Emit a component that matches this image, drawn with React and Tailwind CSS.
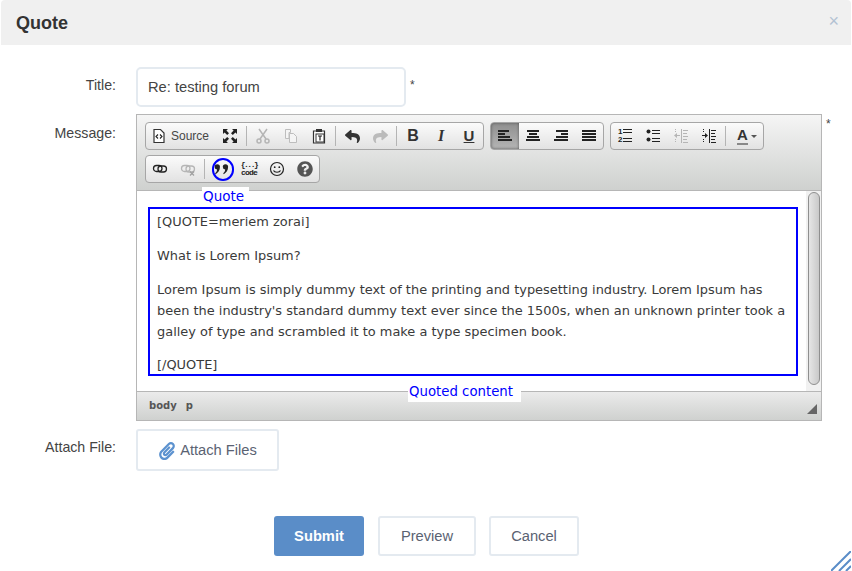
import React from "react";
import { FaPaperclip, FaReply, FaShare, FaQuestionCircle } from "react-icons/fa";

const Bars = ({ rows, color = "#222" }) => (
  <svg width="16" height="16" viewBox="0 0 16 16">
    {rows.map((r, i) => <rect key={i} x={r[0]} y={r[1]} width={r[2]} height={r[3] || 2} fill={color} />)}
  </svg>
);

const Btn = ({ children, active, w = "w-[28px]" }) => (
  <div className={"h-[26px] flex items-center justify-center " + w + (active ? " bg-gradient-to-b from-[#8f8f8f] to-[#b5b5b5] shadow-[inset_0_0_3px_#555] rounded-l-[3px]" : "")}>{children}</div>
);

const Sep = () => <div className="w-[5px] flex justify-center"><div className="w-px h-[20px] mt-[3px] bg-[#b4b4b4]" /></div>;

const Group = ({ children, className = "" }) => (
  <div className={"h-[28px] flex border border-[#a6a6a6] rounded-[4px] bg-gradient-to-b from-[#fbfbfb] to-[#e2e2e2] " + className}>{children}</div>
);

function SourceIcon() {
  return (
    <svg width="16" height="16" viewBox="0 0 16 16">
      <path d="M3 1.500h6.500l3.500 3.500v9.500H3z" fill="#fff" stroke="#333" strokeWidth="1.200" />
      <path d="M7 6.500 5 8.500l2 2M9 6.500l2 2-2 2" fill="none" stroke="#222" strokeWidth="1.100" />
    </svg>
  );
}
function MaxIcon() {
  return (
    <svg width="16" height="16" viewBox="0 0 16 16" fill="#222">
      <path d="M1 1h5L4.400 2.600 7 5.200 5.200 7 2.600 4.400 1 6zM15 1v5l-1.600-1.600L10.800 7 9 5.200l2.600-2.600L10 1zM1 15v-5l1.600 1.600L5.200 9 7 10.800l-2.600 2.600L6 15zM15 15h-5l1.600-1.600L9 10.800 10.800 9l2.600 2.600L15 10z" />
    </svg>
  );
}
function CutIcon() {
  return (
    <svg width="16" height="16" viewBox="0 0 16 16" fill="none" stroke="#b5b5b5" strokeWidth="1.500">
      <path d="M4 1l7 10M12 1 5 11" />
      <circle cx="4" cy="13" r="2" />
      <circle cx="12" cy="13" r="2" />
    </svg>
  );
}
function CopyIcon() {
  return (
    <svg width="16" height="16" viewBox="0 0 16 16" fill="#f4f4f4" stroke="#bdbdbd">
      <path d="M2.500 1.500h5v3h-1.500v6h-3.500z" />
      <path d="M6.500 5.500h4l3 3v6h-7z" />
    </svg>
  );
}
function PasteIcon() {
  return (
    <svg width="16" height="16" viewBox="0 0 16 16">
      <path d="M2.500 3h11v12h-11z" fill="#fff" stroke="#333" strokeWidth="1.200" />
      <rect x="5" y="1" width="6" height="3" fill="#333" />
      <rect x="5" y="6" width="8" height="8" fill="#fff" stroke="#333" />
      <path d="M7 8h4M9 8v4.500" stroke="#222" strokeWidth="1.200" />
    </svg>
  );
}
function LinkIcon({ off }) {
  const c = off ? "#b5b5b5" : "#222";
  return (
    <svg width="16" height="16" viewBox="0 0 16 16" fill="none" stroke={c} strokeWidth="1.300">
      <rect x="1.500" y="4.500" width="8.500" height="6" rx="3" />
      <rect x="6" y="5" width="8.500" height="6" rx="3" />
      {off && <path d="M10 10.500l4 4M14 10.500l-4 4" stroke="#a0a0a0" />}
    </svg>
  );
}
function QuoteIcon() {
  return (
    <svg width="17" height="12" viewBox="0 0 18 14" fill="#222">
      <path d="M1 4.500a3.100 3.100 0 1 1 6.200 0c0 4-2 7-5 8.500l-.7-1c1.400-1 2.200-2.200 2.300-4.300A3.100 3.100 0 0 1 1 4.500z" />
      <path d="M10.500 4.500a3.100 3.100 0 1 1 6.200 0c0 4-2 7-5 8.500l-.7-1c1.400-1 2.200-2.200 2.300-4.300a3.100 3.100 0 0 1-2.800-3.200z" />
    </svg>
  );
}
function SmileIcon() {
  return (
    <svg width="16" height="16" viewBox="0 0 16 16" fill="none" stroke="#222" strokeWidth="1.200">
      <circle cx="8" cy="8" r="6.500" />
      <circle cx="5.700" cy="6.200" r="0.900" fill="#222" stroke="none" />
      <circle cx="10.300" cy="6.200" r="0.900" fill="#222" stroke="none" />
      <path d="M4.500 9.500c1 2.300 6 2.300 7 0" />
    </svg>
  );
}
function OlIcon() {
  return (
    <div className="relative w-[16px] h-[16px] font-['Liberation_Sans',sans-serif] text-[8px] font-bold leading-[8px] text-[#222]">
      <span className="absolute left-[1px] top-0">1</span>
      <span className="absolute left-[1px] top-[8px]">2</span>
      <div className="absolute left-[6px] top-[1px] w-[9px] h-[1px] bg-[#222]" />
      <div className="absolute left-[6px] top-[4px] w-[9px] h-[1px] bg-[#222]" />
      <div className="absolute left-[6px] top-[10px] w-[9px] h-[1px] bg-[#222]" />
      <div className="absolute left-[6px] top-[13px] w-[9px] h-[1px] bg-[#222]" />
    </div>
  );
}
function UlIcon() {
  return (
    <svg width="16" height="16" viewBox="0 0 16 16" fill="#222">
      <circle cx="3.500" cy="3.500" r="2" />
      <circle cx="3.500" cy="11.500" r="2" />
      <path d="M7 2h8v1H7zM7 5h8v1H7zM7 10h8v1H7zM7 13h8v1H7z" />
    </svg>
  );
}
function IndentIcon({ off, flip }) {
  const c = off ? "#b5b5b5" : "#222";
  return (
    <svg width="16" height="16" viewBox="0 0 16 16" fill={c}>
      <path d="M8 1h1v14H8zM10 2h5v1h-5zM10 5h4v1h-4zM10 8h5v1h-5zM10 11h4v1h-4zM10 14h5v1h-5z" />
      <path d="M2 1h1v1H2zM2 3h1v1H2zM2 11h1v1H2zM2 13h1v1H2z" />
      {flip ? <path d="M1 7h3V5l3 2.500L4 10V8H1z" /> : <path d="M7 7H4V5L1 7.500 4 10V8h3z" />}
    </svg>
  );
}

const Label = ({ children, className = "" }) => (
  <div className={"w-[116px] text-right text-[14.2px] text-[#444] shrink-0 " + className}>{children}</div>
);

export default function App() {
  return (
    <div className="relative w-[852px] h-[571px] bg-white overflow-hidden font-['Liberation_Sans',Arial,sans-serif]">
      <div className="h-[45px] ml-px mr-px bg-[#f0f0f0] rounded-t-[4px] flex items-center justify-between pl-[15px] pr-[12px]">
        <h3 className="text-[18px] font-bold text-[#333] relative top-[1px]">Quote</h3>
        <span className="text-[18px] leading-none text-[#b3c2d3] relative top-[-2px]">×</span>
      </div>

      <div className="flex gap-[20px] mt-[22px]">
        <Label className="pt-[8px]">Title:</Label>
        <div className="w-[270px] h-[40px] border-2 border-[#e4eaf0] rounded-[5px] pl-[10px] flex items-center text-[14.7px] text-[#444]">Re: testing forum</div>
        <span className="text-[12px] text-[#444] -ml-[16px] pt-[9px]">*</span>
      </div>

      <div className="flex gap-[20px] mt-[7px]">
        <Label className="pt-[9px]">Message:</Label>
        <div className="relative w-[686px] h-[307px] border border-[#b6b6b6] flex flex-col">
          <div className="h-[76px] shrink-0 border-b border-[#b6b6b6] bg-gradient-to-b from-[#f5f5f5] to-[#cfd1cf] pt-[7px] pl-[8px] flex flex-col gap-[5px]">
            <div className="flex gap-[6px]">
              <Group>
                <div className="w-[70px] h-[26px] flex items-center pl-[5px] gap-[4px] text-[12px] text-[#474747]"><SourceIcon /><span>Source</span></div>
                <Btn><MaxIcon /></Btn>
                <Sep />
                <Btn><CutIcon /></Btn>
                <Btn><CopyIcon /></Btn>
                <Btn><PasteIcon /></Btn>
                <Sep />
                <Btn><FaReply size={15} color="#333" /></Btn>
                <Btn><FaShare size={15} color="#bbb" /></Btn>
                <Sep />
                <Btn><span className="text-[16px] font-bold text-[#333]">B</span></Btn>
                <Btn><span className="text-[16px] font-bold italic font-['Liberation_Serif',serif] text-[#333]">I</span></Btn>
                <Btn><span className="text-[15px] font-bold underline text-[#333]">U</span></Btn>
              </Group>
              <Group>
                <Btn active><Bars rows={[[1, 2, 11], [1, 5, 7], [1, 8, 12], [1, 11, 14]]} /></Btn>
                <Btn><Bars rows={[[2, 2, 12], [4, 5, 8], [2, 8, 12], [1, 11, 14]]} /></Btn>
                <Btn><Bars rows={[[3, 2, 12], [8, 5, 7], [3, 8, 12], [1, 11, 14]]} /></Btn>
                <Btn><Bars rows={[[1, 2, 14], [1, 5, 14], [1, 8, 14], [1, 11, 14]]} /></Btn>
              </Group>
              <Group>
                <Btn><OlIcon /></Btn>
                <Btn><UlIcon /></Btn>
                <Btn><IndentIcon off /></Btn>
                <Btn><IndentIcon flip /></Btn>
                <Sep />
                <div className="w-[35px] h-[26px] flex items-center pl-[9px] gap-[3px]">
                  <span className="text-[15px] font-bold leading-[14px] text-[#333] border-b-2 border-[#888] pb-[1px]">A</span>
                  <span className="w-0 h-0 border-x-[3px] border-x-transparent border-t-[3px] border-t-[#555]" />
                </div>
              </Group>
            </div>
            <Group className="w-[175px]">
              <Btn><LinkIcon /></Btn>
              <Btn><LinkIcon off /></Btn>
              <Sep />
              <Btn><QuoteIcon /></Btn>
              <Btn>
                <div className="font-['Liberation_Mono',monospace] font-bold text-[8px] text-[#222] text-center">
                  <div className="h-[8px] leading-[8px] tracking-[-1.5px]">{"{...}"}</div>
                  <div className="h-[8px] leading-[8px] tracking-[-0.8px]">code</div>
                </div>
              </Btn>
              <Btn><SmileIcon /></Btn>
              <Btn><FaQuestionCircle size={16} color="#555" /></Btn>
            </Group>
          </div>

          <div className="flex h-[200px] shrink-0 bg-white">
            <div className="flex-1 pt-[20px] pl-[20px] pr-[16px] text-[12.95px] leading-[21px] text-[#3a3a3a] font-['DejaVu_Sans',sans-serif]">
              <p>[QUOTE=meriem zorai]</p>
              <p className="mt-[13px]">What is Lorem Ipsum?</p>
              <p className="mt-[13px]">Lorem Ipsum is simply dummy text of the printing and typesetting industry. Lorem Ipsum has been the industry's standard dummy text ever since the 1500s, when an unknown printer took a galley of type and scrambled it to make a type specimen book.</p>
              <p className="mt-[12px]">[/QUOTE]</p>
            </div>
            <div className="w-[15px] shrink-0 bg-[#f1f1f1] pt-[1px] pl-[2px]">
              <div className="w-[12px] h-[193px] rounded-[6px] border border-[#8f8f8f] bg-gradient-to-r from-[#e6e6e6] to-[#c9c9c9]" />
            </div>
          </div>

          <div className="flex-1 border-t border-[#b6b6b6] bg-gradient-to-b from-[#ebebeb] to-[#cfd1cf] flex items-center pl-[12px] pb-[2px] gap-[9px] text-[10px] font-bold text-[#555] font-['DejaVu_Sans',sans-serif]">
            <span>body</span>
            <span>p</span>
            <span className="absolute right-[4px] bottom-[6px] w-0 h-0 border-l-[10px] border-l-transparent border-b-[10px] border-b-[#666]" />
          </div>

          <div className="absolute left-[11px] top-[92px] w-[650px] h-[169px] border-2 border-[#0000ff]" />
          <div className="absolute left-[75px] top-[43px] w-[22px] h-[23px] rounded-full border-2 border-[#0000ff]" />
          <div className="absolute left-[65px] top-[72px] w-[47px] h-[19px] bg-white pl-[1px] text-[13.5px] leading-[19px] text-[#0000ff] font-['DejaVu_Sans',sans-serif]">Quote</div>
          <div className="absolute left-[271px] top-[269px] w-[113px] h-[18px] bg-white pl-[1px] text-[13.3px] leading-[16px] text-[#0000ff] font-['DejaVu_Sans',sans-serif]">Quoted content</div>
        </div>
        <span className="text-[12px] text-[#444] -ml-[16px] pt-[1px]">*</span>
      </div>

      <div className="flex gap-[20px] mt-[8px]">
        <Label className="pt-[8px]">Attach File:</Label>
        <div className="w-[143px] h-[42px] border-2 border-[#e4eaf0] rounded-[3px] flex items-center justify-center gap-[4px] pt-[1px] text-[14.7px] text-[#5a6272]">
          <FaPaperclip size={18} color="#5c92cf" />
          <span>Attach Files</span>
        </div>
      </div>

      <div className="flex mt-[45px] ml-[274px]">
        <div className="w-[90px] h-[40px] rounded-[3px] bg-[#5a8dc8] text-white text-[14.7px] font-bold flex items-center justify-center">Submit</div>
        <div className="w-[98px] h-[40px] ml-[14px] rounded-[3px] border-2 border-[#e4eaf0] text-[14.7px] text-[#5a6272] flex items-center justify-center">Preview</div>
        <div className="w-[90px] h-[40px] ml-[13px] rounded-[3px] border-2 border-[#e4eaf0] text-[14.7px] text-[#5a6272] flex items-center justify-center">Cancel</div>
      </div>

      <svg className="absolute right-[1px] bottom-0" width="20" height="20" viewBox="0 0 20 20" stroke="#5a8dc8" strokeWidth="2">
        <path d="M0 20 20 0M8 20 20 8M15 20l5-5" />
      </svg>
    </div>
  );
}
